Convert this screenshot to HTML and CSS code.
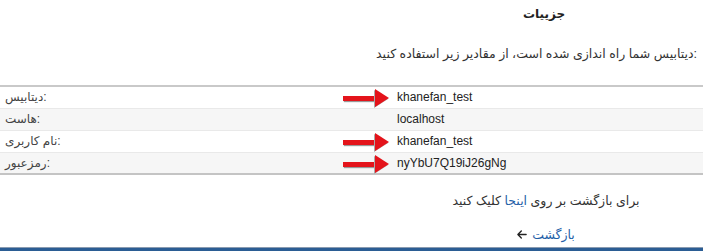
FILE: index.html
```html
<!DOCTYPE html>
<html lang="fa">
<head>
    <meta charset="UTF-8">
    <title>جزییات</title>
    <link rel="stylesheet" href="styles.css">
</head>
<body>
    <div class="page">
        <div class="side">
            <h3 class="title">جزییات</h3>
        </div>

        <p class="intro">دیتابیس شما راه اندازی شده است، از مقادیر زیر استفاده کنید:</p>

        <table class="details">
            <tr>
                <td class="label">دیتابیس:</td>
                <td class="value"><span class="mark"></span>khanefan_test</td>
            </tr>
            <tr>
                <td class="label">هاست:</td>
                <td class="value">localhost</td>
            </tr>
            <tr>
                <td class="label">نام کاربری:</td>
                <td class="value"><span class="mark"></span>khanefan_test</td>
            </tr>
            <tr>
                <td class="label">رمزعبور:</td>
                <td class="value"><span class="mark"></span>nyYbU7Q19iJ26gNg</td>
            </tr>
        </table>

        <div class="side back">
            <p class="hint" dir="rtl">برای بازگشت بر روی <a href="#">اینجا</a> کلیک کنید</p>
            <a class="back-link" href="#">
                <svg class="back-arrow" viewBox="0 0 448 512" width="10" height="11"><path d="M9.4 233.4c-12.5 12.5-12.5 32.8 0 45.3l160 160c12.5 12.5 32.8 12.5 45.3 0s12.5-32.8 0-45.3L109.2 288H416c17.700 0 32-14.3 32-32s-14.3-32-32-32H109.3L214.6 118.6c12.5-12.5 12.5-32.8 0-45.3s-32.8-12.5-45.3 0l-160 160z"/></svg>
                بازگشت
            </a>
        </div>
    </div>
    <div class="footer-bar"></div>
</body>
</html>
```

FILE: styles.css
```css
* {
    box-sizing: border-box;
}

body {
    margin: 0;
    font-family: "Liberation Sans", "DejaVu Sans", sans-serif;
    font-size: 12px;
    color: #333;
    background: #fff;
}

.page {
    height: 247px;
    overflow: hidden;
}

.side {
    width: 330px;
    margin-left: auto;
    text-align: center;
}

.title {
    margin: 0;
    padding: 7px 0 0 12px;
    font-size: 12px;
    font-weight: bold;
    color: #222;
}

.intro {
    margin: 23px 6px 0 0;
    font-size: 12.5px;
    line-height: 20px;
    text-align: right;
}

.details {
    width: 100%;
    margin-top: 21px;
    border-collapse: collapse;
    border-top: 2px solid #c9c9c9;
    border-bottom: 2px solid #c4c4c4;
}

.details td {
    height: 22px;
    padding: 0 5px;
    border-top: 1px solid #e9e9e9;
    text-align: left;
    vertical-align: middle;
}

.details tr:nth-child(even) td {
    background: #f6f6f6;
}

.details .label {
    width: 392px;
    color: #444;
}

.details .value {
    position: relative;
    color: #222;
}

.mark {
    position: absolute;
    left: -49px;
    top: 2px;
    width: 46px;
    height: 18px;
}

.mark::before {
    content: '';
    position: absolute;
    left: 0;
    top: 7px;
    width: 33px;
    height: 5px;
    background: #e4141b;
    box-shadow: 1px 1px 1px #999;
}

.mark::after {
    content: '';
    position: absolute;
    right: 0;
    top: 0;
    border-top: 9px solid transparent;
    border-bottom: 9px solid transparent;
    border-left: 14px solid #e4141b;
    filter: drop-shadow(-1px 1px 0 #aaa);
}

.back {
    width: 314px;
}

.hint {
    margin: 16px 0 0;
    font-size: 12.5px;
    line-height: 20px;
}

.hint a,
.back-link {
    color: #1f5fa8;
    text-decoration: none;
}

.back-link {
    display: inline-flex;
    align-items: center;
    gap: 5px;
    margin-top: 16px;
    font-size: 12.5px;
}

.back-arrow {
    fill: #222;
}

.footer-bar {
    height: 4px;
    border-top: 1px solid #8a9bb0;
    background: #2b5d94;
}
```
